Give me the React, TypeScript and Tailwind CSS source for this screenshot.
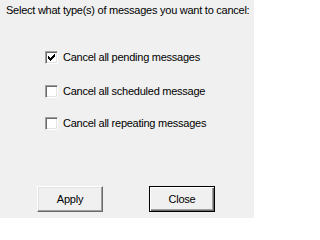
import React from 'react';

function CheckMark() {
  // classic 7x7 pixel tick
  const px: [number, number][] = [
    [6, 0], [5, 1], [6, 1], [0, 2], [4, 2], [5, 2], [6, 2],
    [0, 3], [1, 3], [3, 3], [4, 3], [5, 3], [0, 4], [1, 4], [2, 4], [3, 4], [4, 4],
    [1, 5], [2, 5], [3, 5], [2, 6],
  ];
  return (
    <svg width="7" height="7" viewBox="0 0 7 7" shapeRendering="crispEdges">
      {px.map(([x, y]) => (
        <rect key={`${x}-${y}`} x={x} y={y} width="1" height="1" fill="#000" />
      ))}
    </svg>
  );
}

function CheckRow({ label, checked, className = '' }: { label: string; checked?: boolean; className?: string }) {
  return (
    <label className={`flex h-[13px] items-center ${className}`}>
      <span className="flex h-[13px] w-[13px] items-center justify-center border border-t-[#a0a0a0] border-l-[#a0a0a0] border-b-white border-r-white bg-white shadow-[inset_1px_1px_0_#696969,inset_-1px_-1px_0_#e3e3e3]">
        {checked && <CheckMark />}
      </span>
      <span className="ml-[5px]">{label}</span>
    </label>
  );
}

export default function App() {
  return (
    <div className="flex h-[218px] w-[254px] flex-col bg-[#f0f0f0] font-['Liberation_Sans',Arial,sans-serif] text-[11px] leading-[13px] tracking-[-0.25px] text-black">
      <p className="pl-[6px] pt-[4px] whitespace-nowrap">Select what type(s) of messages you want to cancel:</p>
      <div className="ml-[45px] mt-[34px] flex flex-col">
        <CheckRow label="Cancel all pending messages" checked />
        <CheckRow label="Cancel all scheduled message" className="mt-[21px]" />
        <CheckRow label="Cancel all repeating messages" className="mt-[19px]" />
      </div>
      <div className="mt-auto mb-[6px] flex gap-[46px] pl-[37px]">
        <button className="flex h-[26px] w-[66px] items-center justify-center border border-t-white border-l-white border-b-[#696969] border-r-[#696969] bg-[#f0f0f0] shadow-[inset_-1px_-1px_0_#a0a0a0,inset_1px_1px_0_#e3e3e3]">
          Apply
        </button>
        <button className="flex h-[26px] w-[66px] items-center justify-center border border-black bg-[#f0f0f0] shadow-[inset_1px_1px_0_#ffffff,inset_-1px_-1px_0_#696969,inset_-2px_-2px_0_#a0a0a0]">
          Close
        </button>
      </div>
    </div>
  );
}
